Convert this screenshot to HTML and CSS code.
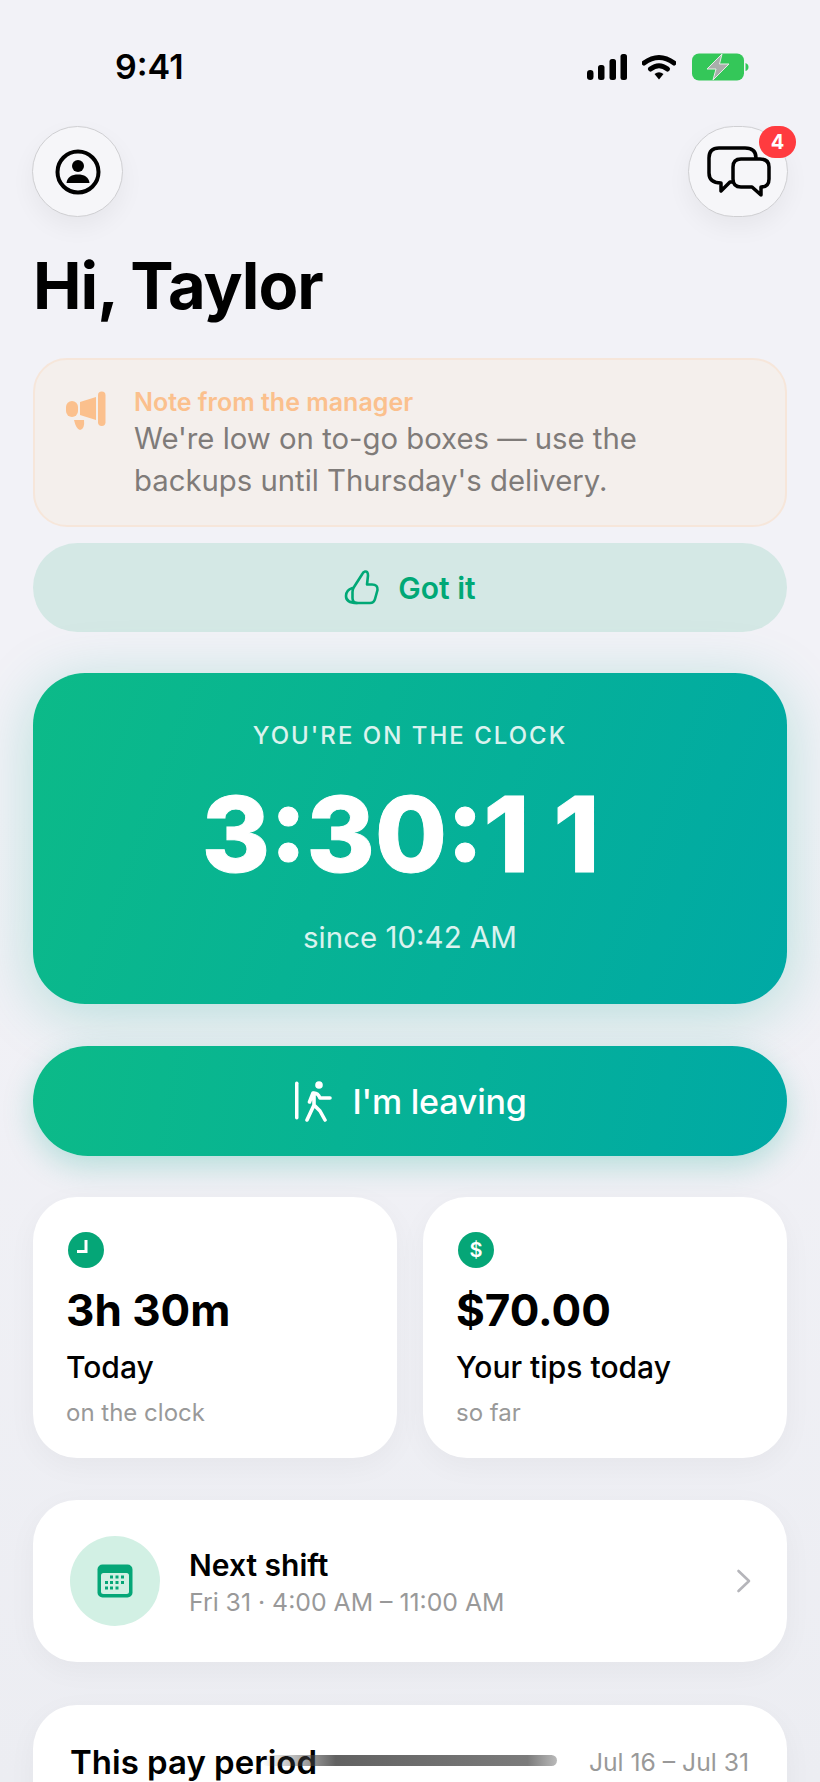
FILE: index.html
```html
<!DOCTYPE html>
<html lang="en">
<head>
    <meta charset="UTF-8">
    <meta name="viewport" content="width=device-width, initial-scale=1.0">
    <title>Home</title>
    <link rel="stylesheet" href="styles.css">
</head>
<body>
    <div class="screen">
        <div class="status-bar">
            <span class="status-time">9:41</span>
            <div class="status-icons">
                <svg class="icon-signal" width="40" height="26" viewBox="0 0 40 26">
                    <rect x="0" y="16" width="6.5" height="10" rx="3.2"/>
                    <rect x="11" y="11" width="6.5" height="15" rx="2.5"/>
                    <rect x="22.5" y="5" width="6.5" height="21" rx="2.5"/>
                    <rect x="33.5" y="0" width="6.5" height="26" rx="2.5"/>
                </svg>
                <svg class="icon-wifi" width="34" height="26" viewBox="0 0 34 26">
                    <path d="M2 9 Q17 -2 32 9" fill="none" stroke="#000" stroke-width="5" stroke-linecap="round"/>
                    <path d="M8.5 15 Q17 8.5 25.5 15" fill="none" stroke="#000" stroke-width="5" stroke-linecap="round"/>
                    <path d="M12.5 20 Q17 16.5 21.5 20 L17 25.5 Z" fill="#000"/>
                </svg>
                <svg class="icon-battery" width="57" height="28" viewBox="0 0 57 28">
                    <rect x="0" y="0.500" width="52" height="27" rx="7" fill="#34c759"/>
                    <path d="M53.500 10 q3 1 3 4 t-3 4 z" fill="#34c759"/>
                    <path d="M30 1 L15 16 H24 L21 27 L37 11 H27.500 Z" fill="#a9aeab" stroke="#e4eee6" stroke-width="1"/>
                </svg>
            </div>
        </div>

        <div class="top-row">
            <button class="round-btn profile-btn">
                <svg width="46" height="46" viewBox="0 0 46 46">
                    <circle cx="23" cy="23" r="20.500" fill="none" stroke="#000" stroke-width="4"/>
                    <circle cx="23" cy="17" r="6"/>
                    <path d="M11.500 34 C12 28 17 25.500 23 25.500 C29 25.500 34 28 34.500 34 Z"/>
                </svg>
            </button>
            <button class="round-btn chat-btn">
                <svg class="chat-icon" width="66" height="54" viewBox="0 0 66 54">
                    <path d="M13 3 H39 Q50 3 50 13 V27 Q50 37 40 37 H24 L15 46 V38 Q3 38 3 28 V13 Q3 3 13 3 Z" fill="none" stroke="#000" stroke-width="3.500" stroke-linejoin="round"/>
                    <path d="M35 14 H54 Q63 14 63 22 V34 Q63 42 55 42 V50 L46 42 H35 Q27 42 27 34 V22 Q27 14 35 14 Z" fill="#f6f6f9" stroke="#000" stroke-width="3.500" stroke-linejoin="round"/>
                </svg>
                <span class="badge">4</span>
            </button>
        </div>

        <h1 class="greeting">Hi, Taylor</h1>

        <div class="note">
            <svg class="note-icon" width="42" height="42" viewBox="14 8 42 42">
                <rect x="15" y="19" width="12" height="16" rx="6" fill="#fbc08d"/>
                <path d="M29 20 L45 15 V38 L29 33 Z" fill="#fbc08d"/>
                <rect x="47" y="9.500" width="7.500" height="34.500" rx="3.700" fill="#fbc08d"/>
                <path d="M23 38 H33 Q34 47 29 48 Q25 47 23 38 Z" fill="#fbc08d"/>
            </svg>
            <div class="note-text">
                <div class="note-title">Note from the manager</div>
                <div class="note-body">We're low on to-go boxes — use the<br>backups until Thursday's delivery.</div>
            </div>
        </div>

        <button class="got-it">
            <svg width="36" height="38" viewBox="14 9 36 38">
                <path d="M27 43 H40 Q44 43 45 39 L47.500 30 Q48 24.500 42 24.500 H37 L38 15.500 Q38 11 35 11.500 Q33 12 32 14.500 L24 27 Q22.500 29 22.500 32 V38 Q22.500 43 27 43 Z" fill="none" stroke="#00a876" stroke-width="2.600" stroke-linejoin="round"/>
                <path d="M22.500 28 Q16 30 16 36 Q16 43 27 43" fill="none" stroke="#00a876" stroke-width="2.600" stroke-linecap="round"/>
            </svg>
            <span>Got it</span>
        </button>

        <div class="clock-card">
            <div class="clock-label">YOU'RE ON THE CLOCK</div>
            <div class="clock-time">3:30:1<span class="clock-last">1</span></div>
            <div class="clock-since">since 10:42 AM</div>
        </div>

        <button class="leave-btn">
            <svg width="40" height="42" viewBox="0 0 40 42">
                <rect x="2" y="1.500" width="3.500" height="38" rx="1.700" fill="#fff"/>
                <circle cx="26" cy="5" r="3.800" fill="#fff"/>
                <path d="M20 13 L16.500 22 M21 13 L21 25 L14 40 M21 25 L27 31 L32 40 M21 13 Q25 13 27 18 H37" fill="none" stroke="#fff" stroke-width="3.600" stroke-linecap="round" stroke-linejoin="round"/>
            </svg>
            <span>I'm leaving</span>
        </button>

        <div class="stat-grid">
            <div class="stat-card">
                <svg class="stat-icon" width="36" height="36" viewBox="0 0 36 36">
                    <circle cx="18" cy="18" r="18" fill="#05a677"/>
                    <path d="M18 8 V19.500 H9" fill="none" stroke="#fff" stroke-width="3"/>
                </svg>
                <div class="stat-value">3h 30m</div>
                <div class="stat-label">Today</div>
                <div class="stat-sub">on the clock</div>
            </div>
            <div class="stat-card">
                <div class="stat-icon dollar">$</div>
                <div class="stat-value">$70.00</div>
                <div class="stat-label">Your tips today</div>
                <div class="stat-sub">so far</div>
            </div>
        </div>

        <div class="shift-card">
            <div class="shift-icon">
                <svg width="36" height="34" viewBox="0 0 36 34">
                    <rect x="0.500" y="0.500" width="35" height="33" rx="5" fill="#05a677"/>
                    <rect x="4" y="9" width="28" height="21" rx="2.500" fill="#d2f0e4"/>
                    <g fill="#05a677">
                        <rect x="13" y="11.500" width="3" height="3"/>
                        <rect x="18.500" y="11.500" width="3" height="3"/>
                        <rect x="24" y="11.500" width="3" height="3"/>
                        <rect x="8" y="17" width="3" height="3"/>
                        <rect x="13" y="17" width="3" height="3"/>
                        <rect x="18.500" y="17" width="3" height="3"/>
                        <rect x="24" y="17" width="3" height="3"/>
                        <rect x="8" y="22.500" width="3" height="3"/>
                        <rect x="13" y="22.500" width="3" height="3"/>
                        <rect x="18.500" y="22.500" width="3" height="3"/>
                    </g>
                </svg>
            </div>
            <div class="shift-text">
                <div class="shift-title">Next shift</div>
                <div class="shift-sub">Fri 31 · 4:00 AM – 11:00 AM</div>
            </div>
            <svg class="chevron" width="16" height="24" viewBox="0 0 16 24">
                <path d="M2.500 2 L13 12 L2.500 22" fill="none" stroke="#b5b5ba" stroke-width="2.600" stroke-linecap="round" stroke-linejoin="round"/>
            </svg>
        </div>

        <div class="pay-card">
            <div class="pay-title">This pay period</div>
            <div class="pay-range">Jul 16 – Jul 31</div>
        </div>

        <div class="home-bar"></div>
    </div>
</body>
</html>
```

FILE: styles.css
```css
* {
    box-sizing: border-box;
}
html, body {
    margin: 0;
    padding: 0;
    height: 1782px;
    overflow: hidden;
}
body {
    font-family: Inter, "Noto Sans", sans-serif;
    color: #000;
    background: linear-gradient(#f2f2f7, #f2f2f7 45%, #ecedf2);
}
button {
    font-family: inherit;
    border: none;
    cursor: pointer;
}
.screen {
    position: relative;
    height: 1782px;
    padding: 0 33px;
    overflow: hidden;
}

/* status bar */
.status-bar {
    display: flex;
    justify-content: space-between;
    align-items: center;
    height: 26px;
    margin-top: 54px;
    padding: 0 38px 0 82px;
}
.status-time {
    font-size: 34px;
    font-weight: 600;
    line-height: 26px;
}
.status-icons {
    display: flex;
    align-items: center;
    gap: 15px;
}
.icon-wifi {
    margin-right: 1px;
}

/* top buttons */
.top-row {
    display: flex;
    justify-content: space-between;
    margin-top: 46px;
}
.round-btn {
    position: relative;
    display: flex;
    align-items: center;
    justify-content: center;
    height: 91px;
    padding: 0;
    border-radius: 46px;
    background: #f6f6f9;
    border: 1px solid #cfcfd2;
    box-shadow: 0 10px 24px rgba(0, 0, 0, 0.05);
}
.profile-btn {
    width: 91px;
    margin-left: -1px;
}
.chat-btn {
    width: 100px;
    margin-right: -1px;
}
.chat-icon {
    margin-left: 2px;
}
.badge {
    position: absolute;
    top: -1px;
    right: -9px;
    width: 37px;
    height: 32px;
    border-radius: 16px;
    background: #ff3b3f;
    color: #fff;
    font-size: 20px;
    font-weight: 700;
    line-height: 32px;
    text-align: center;
}

.greeting {
    margin: 31px 0 0 0;
    font-size: 65px;
    font-weight: 700;
    line-height: 76px;
    letter-spacing: -1px;
}

/* manager note */
.note {
    display: flex;
    height: 169px;
    margin-top: 34px;
    padding: 28px 30px 0 30px;
    gap: 27px;
    background: #f4efec;
    border: 2px solid #f6e6da;
    border-radius: 34px;
}
.note-icon {
    margin-top: 2px;
    flex-shrink: 0;
}
.note-title {
    color: #fbc08d;
    font-size: 25px;
    font-weight: 600;
    line-height: 28px;
}
.note-body {
    margin-top: 2px;
    color: #7f7b79;
    font-size: 29.300px;
    line-height: 42px;
}
.got-it {
    display: flex;
    align-items: center;
    justify-content: center;
    gap: 18px;
    width: 100%;
    height: 89px;
    margin-top: 16px;
    background: #d4e8e5;
    border-radius: 45px;
    color: #00a876;
    font-size: 30px;
    font-weight: 600;
}

/* clock */
.clock-card {
    height: 331px;
    margin-top: 41px;
    padding-top: 48px;
    border-radius: 52px;
    background: linear-gradient(110deg, #0cba88, #00a9a5);
    box-shadow: 0 10px 60px rgba(0, 169, 140, 0.25);
    color: #fff;
    text-align: center;
}
.clock-label {
    font-size: 24px;
    font-weight: 500;
    line-height: 30px;
    letter-spacing: 2px;
    opacity: 0.85;
}
.clock-time {
    margin-top: 23px;
    font-size: 104px;
    font-weight: 800;
    line-height: 120px;
    -webkit-text-stroke: 1px #fff;
}
/* the two ones sit apart, like tabular digits */
.clock-last {
    margin-left: 24px;
    margin-right: 19px;
}
.clock-since {
    margin-top: 26px;
    font-size: 29.500px;
    line-height: 34px;
    opacity: 0.85;
}
.leave-btn {
    display: flex;
    align-items: center;
    justify-content: center;
    gap: 19px;
    width: 100%;
    height: 110px;
    margin-top: 42px;
    border-radius: 55px;
    background: linear-gradient(100deg, #0cba88, #00a9a5);
    box-shadow: 0 10px 30px rgba(0, 169, 140, 0.25);
    color: #fff;
    font-size: 34px;
    font-weight: 500;
    letter-spacing: -0.2px;
}

/* stat cards */
.stat-grid {
    display: grid;
    grid-template-columns: 1fr 1fr;
    gap: 26px;
    margin-top: 41px;
}
.stat-card {
    height: 261px;
    padding: 35px 34px 0 33px;
    background: #fff;
    border-radius: 44px;
    box-shadow: 0 8px 30px rgba(0, 0, 0, 0.04);
}
.stat-icon {
    display: block;
    margin-left: 2px;
}
.dollar {
    width: 36px;
    height: 36px;
    border-radius: 18px;
    background: #05a677;
    color: #fff;
    font-size: 20px;
    font-weight: 600;
    line-height: 36px;
    text-align: center;
}
.stat-value {
    margin-top: 15px;
    font-size: 44px;
    font-weight: 700;
    line-height: 54px;
}
.stat-label {
    margin-top: 12px;
    font-size: 30px;
    font-weight: 500;
    line-height: 36px;
}
.stat-sub {
    margin-top: 13px;
    color: #999;
    font-size: 24px;
    line-height: 30px;
}

/* next shift */
.shift-card {
    display: flex;
    align-items: center;
    height: 162px;
    margin-top: 42px;
    padding: 0 35px 0 37px;
    background: #fff;
    border-radius: 44px;
    box-shadow: 0 8px 30px rgba(0, 0, 0, 0.04);
}
.shift-icon {
    display: flex;
    align-items: center;
    justify-content: center;
    width: 90px;
    height: 90px;
    border-radius: 45px;
    background: #d2f0e4;
    flex-shrink: 0;
}
.shift-text {
    flex: 1;
    margin-left: 29px;
}
.shift-title {
    font-size: 30px;
    font-weight: 600;
    line-height: 38px;
}
.shift-sub {
    margin-top: 3px;
    color: #999;
    font-size: 24.800px;
    line-height: 30px;
}

/* pay period */
.pay-card {
    display: flex;
    justify-content: space-between;
    align-items: center;
    height: 140px;
    margin-top: 43px;
    padding: 0 38px 26px 37px;
    background: #fff;
    border-radius: 44px 44px 0 0;
    box-shadow: 0 8px 30px rgba(0, 0, 0, 0.04);
}
.pay-title {
    font-size: 33px;
    font-weight: 600;
    line-height: 40px;
}
.pay-range {
    color: #999;
    font-size: 24.700px;
    line-height: 30px;
}

/* home indicator fades over the text */
.home-bar {
    position: absolute;
    left: 262px;
    top: 1755px;
    width: 295px;
    height: 11px;
    border-radius: 6px;
    background: linear-gradient(90deg, rgba(70, 70, 70, 0), rgba(70, 70, 70, 0.85) 25%, rgba(90, 90, 90, 0.8) 90%, rgba(140, 140, 140, 0.6));
}
```
